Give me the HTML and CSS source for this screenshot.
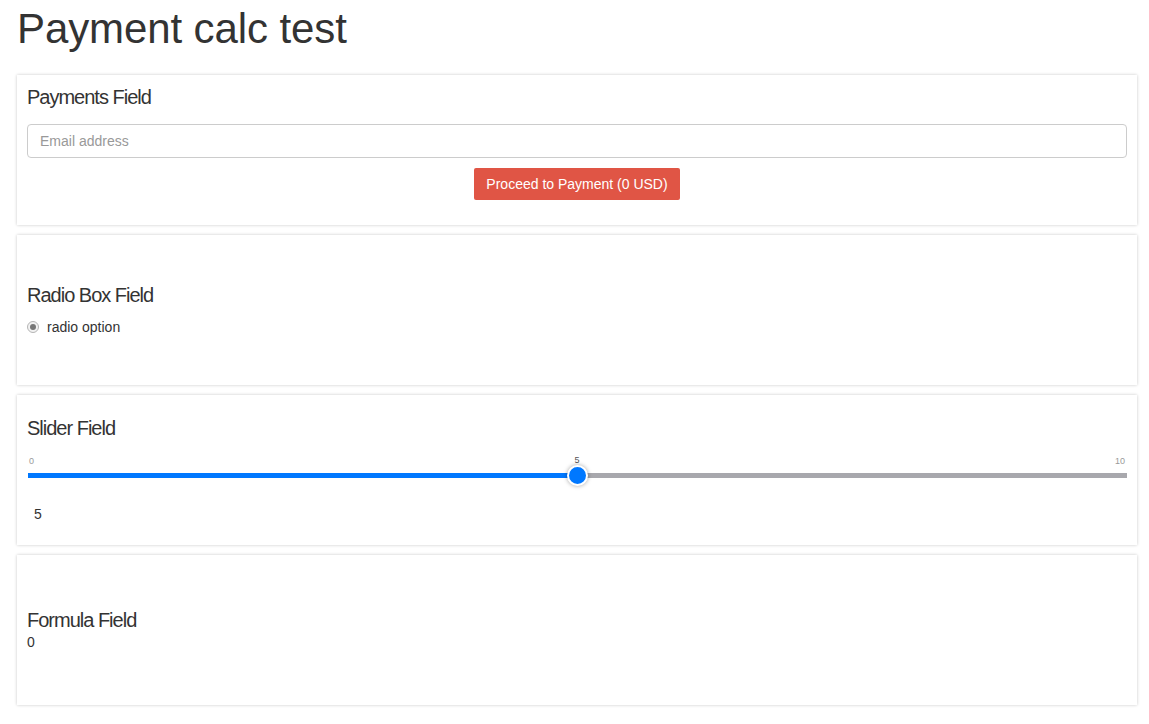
FILE: index.html
```html
<!DOCTYPE html>
<html>
<head>
<meta charset="utf-8">
<title>Payment calc test</title>
<link rel="stylesheet" href="styles.css">
</head>
<body>
<h1 class="page-title">Payment calc test</h1>

<div class="card card-payments">
  <h3 class="field-title">Payments Field</h3>
  <input class="email-input" type="text" placeholder="Email address">
  <div class="btn-row">
    <button class="btn-pay" type="button">Proceed to Payment (0 USD)</button>
  </div>
</div>

<div class="card">
  <h3 class="field-title">Radio Box Field</h3>
  <label class="radio-row"><span class="radio-dot"></span><span>radio option</span></label>
</div>

<div class="card">
  <h3 class="field-title">Slider Field</h3>
  <div class="slider">
    <span class="slider-min">0</span>
    <span class="slider-max">10</span>
    <div class="slider-track">
      <div class="slider-fill" style="width: 50%"></div>
    </div>
    <span class="slider-cur" style="left: 50%">5</span>
    <span class="slider-thumb" style="left: 50%"></span>
  </div>
  <div class="slider-value">5</div>
</div>

<div class="card">
  <h3 class="field-title">Formula Field</h3>
  <div class="formula-value">0</div>
</div>
</body>
</html>
```

FILE: styles.css
```css
html, body {
  margin: 0;
  padding: 0;
  background: #fff;
}
body {
  padding: 6px 12px 0 17px;
  font-family: "Liberation Sans", Arial, Helvetica, sans-serif;
  font-size: 14px;
  color: #333;
}
.page-title {
  margin: 0 0 23px 0;
  font-size: 42px;
  font-weight: normal;
  line-height: 46px;
  letter-spacing: -0.1px;
  color: #333;
}
.card {
  box-sizing: border-box;
  min-height: 150px;
  margin-bottom: 10px;
  padding: 12px 10px;
  background: #fff;
  box-shadow: 0 0 3px rgba(0, 0, 0, 0.22);
  display: flex;
  flex-direction: column;
  justify-content: center;
}
.card-payments {
  padding-top: 11px;
}
.field-title {
  margin: 0;
  font-size: 20px;
  font-weight: normal;
  line-height: 22px;
  letter-spacing: -1px;
  color: #333;
}
.card-payments .field-title {
  margin-bottom: 16px;
}
.email-input {
  box-sizing: border-box;
  display: block;
  width: 100%;
  height: 34px;
  padding: 6px 12px;
  border: 1px solid #ccc;
  border-radius: 4px;
  font-family: inherit;
  font-size: 14px;
  color: #555;
  outline: none;
}
.email-input::placeholder {
  color: #999;
}
.btn-row {
  display: flex;
  justify-content: center;
  margin: 10px 0 13px;
}
.btn-pay {
  height: 32px;
  padding: 0 12px;
  border: none;
  border-radius: 2px;
  background: #e05545;
  color: #fff;
  font-family: inherit;
  font-size: 14px;
  line-height: 32px;
}
.radio-row {
  display: flex;
  align-items: center;
  gap: 8px;
  margin-top: 11px;
  line-height: 20px;
  font-size: 14px;
  color: #333;
}
.radio-dot {
  box-sizing: border-box;
  width: 12px;
  height: 12px;
  border-radius: 50%;
  border: 1px solid #b5b5b5;
  background: #f2f2f2;
  position: relative;
}
.radio-dot::after {
  content: "";
  position: absolute;
  left: 2px;
  top: 2px;
  width: 6px;
  height: 6px;
  border-radius: 50%;
  background: #777;
}
.slider {
  position: relative;
  height: 50px;
}
.slider-min, .slider-max, .slider-cur {
  position: absolute;
  top: 18px;
  font-size: 9px;
  line-height: 9px;
  color: #999;
}
.slider-min { left: 2px; }
.slider-max { right: 2px; }
.slider-cur {
  top: 17px;
  color: #555;
  transform: translateX(-50%);
}
.slider-track {
  position: absolute;
  left: 1px;
  right: 0;
  top: 34px;
  height: 5px;
  background: #a8a8ad;
}
.slider-fill {
  height: 100%;
  background: #0078ff;
}
.slider-thumb {
  position: absolute;
  top: 26px;
  box-sizing: border-box;
  width: 21px;
  height: 21px;
  margin-left: -10px;
  border-radius: 50%;
  background: #0078ff;
  border: 2px solid #fff;
  box-shadow: 0 0 4px rgba(0, 0, 0, 0.35);
}
.slider-value {
  margin-top: 15px;
  padding-left: 7px;
  line-height: 20px;
  font-size: 14px;
  color: #333;
}
.formula-value {
  margin-top: 1px;
  line-height: 20px;
  font-size: 14px;
  color: #333;
}
```
